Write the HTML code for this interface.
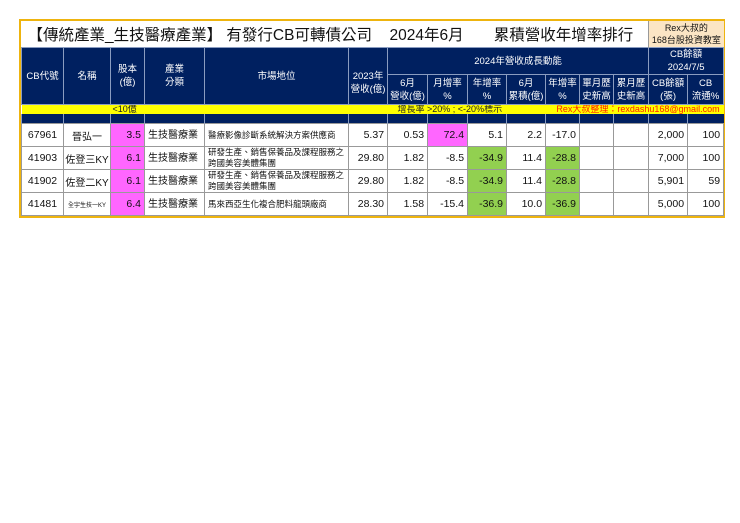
<!DOCTYPE html>
<html><head><meta charset="utf-8"><style>
body{margin:0;width:740px;height:523px;background:#fff;font-family:"Liberation Sans","Noto Sans CJK TC",sans-serif;position:relative;overflow:hidden}
.wrap{position:absolute;left:19px;top:19px;border:2px solid #eeb40e;width:702px}
table{border-collapse:collapse;table-layout:fixed;width:702px}
td{padding:0;overflow:hidden;white-space:nowrap;vertical-align:middle}
.t td{height:26px;font-size:15.5px;color:#111}
.h td{background:#002060;color:#fff;font-size:9.5px;text-align:center;line-height:13px;border:1px solid #8a9cc0}
.y td{background:#ffff00;height:9px;font-size:9px;line-height:9px;color:#222}
.b td{background:#002060;height:9px;border-left:1px solid #8a9cc0}
.d td{height:22px;font-size:10.5px;border:1px solid #999;text-align:right;padding-right:3px;color:#111}
.d td.c{text-align:center;padding:0}
.d td.n{text-align:center;padding:0;font-size:10px}
.d td.l{text-align:left;padding-left:3px;font-size:8.5px;line-height:11px}
.pk{background:#ff66ff}.gr{background:#92d050}
</style></head><body>
<div class="wrap"><table>
<colgroup><col style="width:42px"><col style="width:47px"><col style="width:34px"><col style="width:60px"><col style="width:144px"><col style="width:39px"><col style="width:40px"><col style="width:40px"><col style="width:39px"><col style="width:39px"><col style="width:34px"><col style="width:34px"><col style="width:35px"><col style="width:39px"><col style="width:36px"></colgroup>
<tr class="t"><td colspan="6" style="padding-left:6px">【傳統產業_生技醫療產業】 有發行CB可轉債公司</td><td colspan="7" style="padding-left:2px">2024年6月 &nbsp; &nbsp; &nbsp; 累積營收年增率排行</td><td colspan="2" style="background:#fbe5c4;text-align:center;font-size:9px;line-height:12px;border-left:1px solid #999">Rex大叔的<br>168台股投資教室</td></tr>
<tr class="h"><td rowspan="2" style="height:51px">CB代號</td><td rowspan="2">名稱</td><td rowspan="2">股本<br>(億)</td><td rowspan="2">產業<br>分類</td><td rowspan="2">市場地位</td><td rowspan="2" style="padding-top:14px">2023年<br>營收(億)</td><td colspan="7" style="height:20px">2024年營收成長動能</td><td colspan="2">CB餘額<br>2024/7/5</td></tr>
<tr class="h"><td style="height:29px">6月<br>營收(億)</td><td>月增率<br>%</td><td>年增率<br>%</td><td>6月<br>累積(億)</td><td>年增率<br>%</td><td>單月歷<br>史新高</td><td>累月歷<br>史新高</td><td>CB餘額<br>(張)</td><td>CB<br>流通%</td></tr>
<tr class="y"><td colspan="2"></td><td colspan="2" style="padding-left:2px">&lt;10億</td><td colspan="2"></td><td colspan="4" style="padding-left:10px">增長率 &gt;20% ; &lt;-20%標示</td><td colspan="5" style="color:#ff2000;text-align:right;padding-right:4px">Rex大叔整理：rexdashu168@gmail.com</td></tr>
<tr class="b"><td></td><td></td><td></td><td></td><td></td><td></td><td></td><td></td><td></td><td></td><td></td><td></td><td></td><td></td><td></td></tr>
<tr class="d"><td class="c">67961</td><td class="n">晉弘一</td><td class="pk">3.5</td><td class="l" style="font-size:10px">生技醫療業</td><td class="l">醫療影像診斷系統解決方案供應商</td><td>5.37</td><td>0.53</td><td class="pk">72.4</td><td>5.1</td><td>2.2</td><td>-17.0</td><td></td><td></td><td>2,000</td><td>100</td></tr>
<tr class="d"><td class="c">41903</td><td class="n">佐登三KY</td><td class="pk">6.1</td><td class="l" style="font-size:10px">生技醫療業</td><td class="l">研發生產、銷售保養品及課程服務之<br>跨國美容美體集團</td><td>29.80</td><td>1.82</td><td>-8.5</td><td class="gr">-34.9</td><td>11.4</td><td class="gr">-28.8</td><td></td><td></td><td>7,000</td><td>100</td></tr>
<tr class="d"><td class="c">41902</td><td class="n">佐登二KY</td><td class="pk">6.1</td><td class="l" style="font-size:10px">生技醫療業</td><td class="l">研發生產、銷售保養品及課程服務之<br>跨國美容美體集團</td><td>29.80</td><td>1.82</td><td>-8.5</td><td class="gr">-34.9</td><td>11.4</td><td class="gr">-28.8</td><td></td><td></td><td>5,901</td><td>59</td></tr>
<tr class="d"><td class="c">41481</td><td class="c" style="font-size:6px">全宇生技一KY</td><td class="pk">6.4</td><td class="l" style="font-size:10px">生技醫療業</td><td class="l">馬來西亞生化複合肥料龍頭廠商</td><td>28.30</td><td>1.58</td><td>-15.4</td><td class="gr">-36.9</td><td>10.0</td><td class="gr">-36.9</td><td></td><td></td><td>5,000</td><td>100</td></tr>
</table></div>
</body></html>
